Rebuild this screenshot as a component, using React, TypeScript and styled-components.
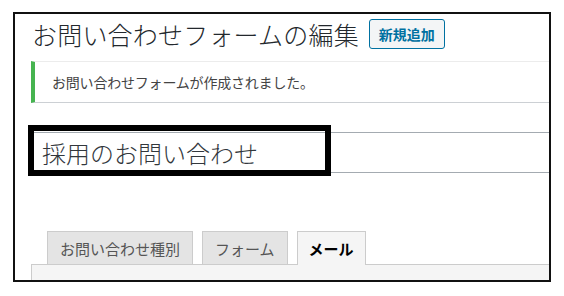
import styled, { createGlobalStyle } from "styled-components";

const GlobalStyle = createGlobalStyle`
  html, body {
    margin: 0;
    background: #fff;
  }
  body {
    font-family: "Noto Sans CJK JP", "Noto Sans", sans-serif;
    color: #23282d;
  }
`;

const tabs = [
  { label: "お問い合わせ種別", active: false },
  { label: "フォーム", active: false },
  { label: "メール", active: true },
];

export default function App() {
  return (
    <>
      <GlobalStyle />
      <Page>
        <Frame>
          <HeadingRow>
            <Heading>お問い合わせフォームの編集</Heading>
            <AddButton>新規追加</AddButton>
          </HeadingRow>

          <Notice>お問い合わせフォームが作成されました。</Notice>

          <TitleWrap>
            <TitleInput>採用のお問い合わせ</TitleInput>
            <Highlight />
          </TitleWrap>

          <TabList>
            {tabs.map((t) => (
              <Tab key={t.label} active={t.active}>
                {t.label}
              </Tab>
            ))}
          </TabList>
          <Panel />
        </Frame>
      </Page>
    </>
  );
}

const Page = styled.div`
  width: 564px;
  height: 296px;
  box-sizing: border-box;
  padding: 12px 0 0 13px;
`;

const Frame = styled.div`
  width: 538px;
  height: 270px;
  box-sizing: border-box;
  border: 2px solid #111;
  overflow: hidden;
  padding: 5px 0 0 16px;
`;

const HeadingRow = styled.div`
  display: flex;
  align-items: center;
  height: 30px;
`;

const Heading = styled.h1`
  margin: 0 0 0 1px;
  font-size: 25px;
  font-weight: 300;
  letter-spacing: 0.2px;
  line-height: 30px;
  color: #23282d;
  white-space: nowrap;
`;

const AddButton = styled.button`
  margin-left: 10px;
  height: 30px;
  padding: 0 9px;
  border: 1px solid #0071a1;
  border-radius: 3px;
  background: #f3f5f6;
  color: #0071a1;
  font-family: inherit;
  font-size: 14px;
  font-weight: 700;
  line-height: 28px;
  white-space: nowrap;
`;

const Notice = styled.div`
  margin: 12px -20px 0 0;
  height: 42px;
  box-sizing: border-box;
  display: flex;
  align-items: center;
  padding-left: 17px;
  background: #fff;
  border-left: 4px solid #46b450;
  border-top: 1px solid #ececec;
  border-bottom: 1px solid #ccd0d4;
  font-size: 14px;
  letter-spacing: -0.2px;
  color: #444;
  white-space: nowrap;
`;

const TitleWrap = styled.div`
  position: relative;
  margin: 29px -20px 0 0;
`;

const TitleInput = styled.div`
  height: 41px;
  box-sizing: border-box;
  display: flex;
  align-items: center;
  padding-left: 10px;
  border: 1px solid #a4abb1;
  background: #fff;
  font-size: 24px;
  font-weight: 300;
  color: #32373c;
  white-space: nowrap;
`;

const Highlight = styled.div`
  position: absolute;
  left: -3px;
  top: -7px;
  width: 303px;
  height: 51px;
  box-sizing: border-box;
  border: 6px solid #000;
  pointer-events: none;
`;

const TabList = styled.div`
  display: flex;
  align-items: flex-end;
  gap: 9px;
  margin-top: 58px;
  padding-left: 16px;
  height: 33px;
`;

const Tab = styled.div<{ active: boolean }>`
  position: relative;
  z-index: 1;
  box-sizing: border-box;
  height: ${({ active }) => (active ? "34px" : "33px")};
  margin-bottom: ${({ active }) => (active ? "-1px" : "0")};
  padding: 0 ${({ active }) => (active ? "11px" : "12px")};
  display: flex;
  align-items: center;
  border: 1px solid #ccc;
  border-bottom: none;
  background: ${({ active }) => (active ? "#f5f5f5" : "#e4e4e4")};
  color: ${({ active }) => (active ? "#000" : "#555")};
  font-size: 15px;
  font-weight: ${({ active }) => (active ? 700 : 400)};
  white-space: nowrap;
`;

const Panel = styled.div`
  height: 30px;
  margin-right: -20px;
  border-top: 1px solid #ccc;
  border-left: 1px solid #ccc;
  background: #f5f5f5;
`;
